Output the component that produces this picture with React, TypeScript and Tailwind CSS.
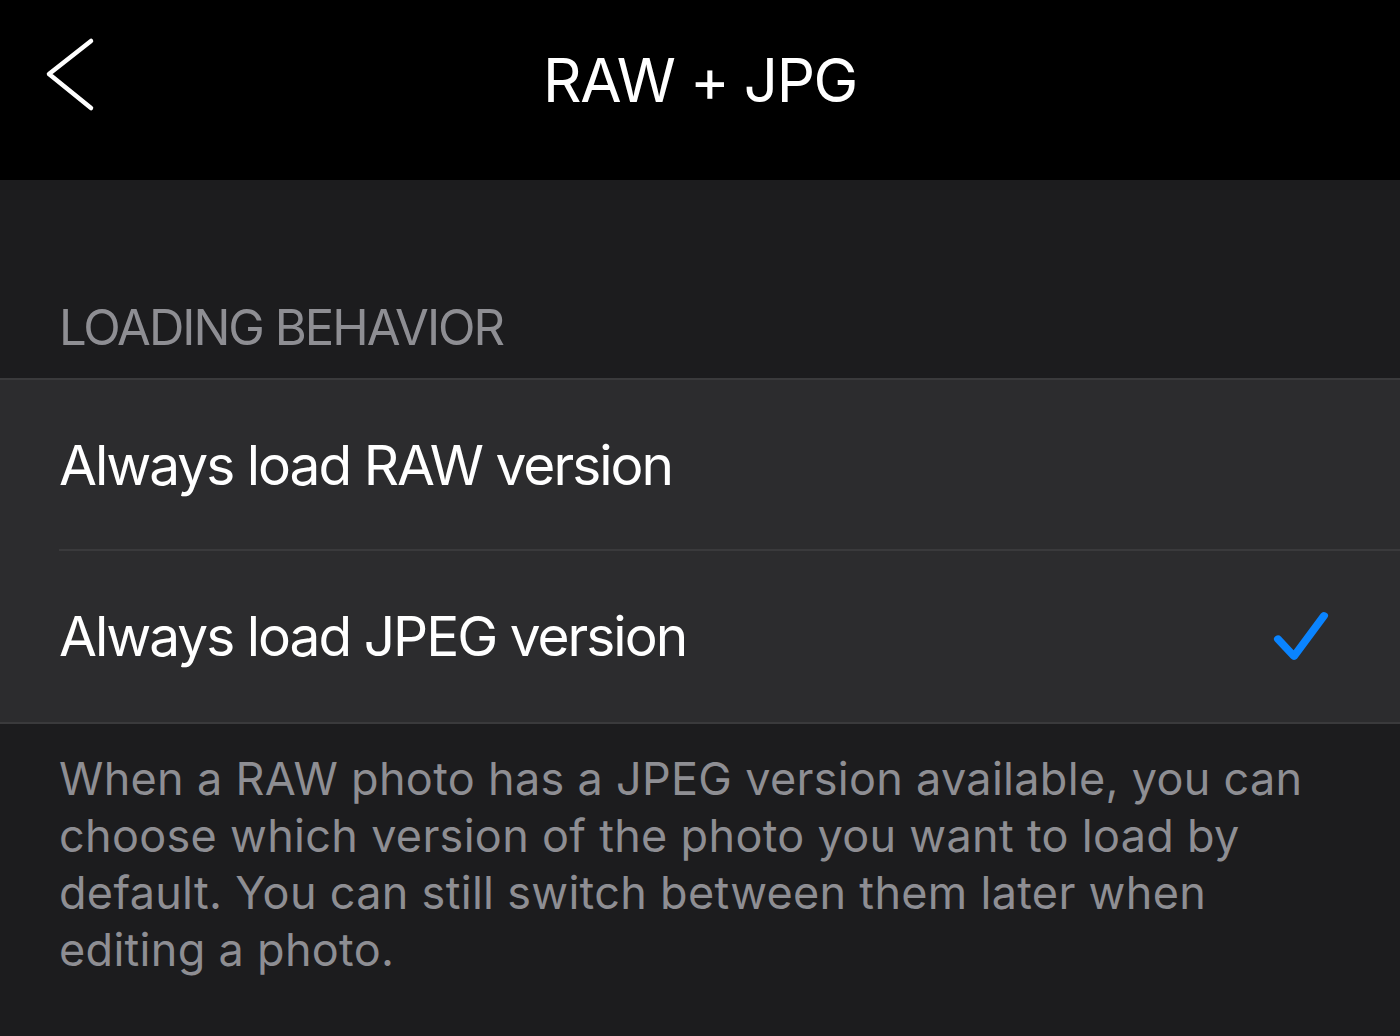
export default function App() {
  return (
    <div className="w-[1400px] h-[1036px] bg-[#1c1c1e] overflow-hidden font-['Inter','Liberation_Sans',sans-serif]">
      {/* Nav bar */}
      <div className="h-[180px] bg-black flex items-center justify-center relative">
        <button className="absolute left-[44px] top-[36px] w-[54px] h-[78px] flex items-center justify-center">
          <svg width="54" height="78" viewBox="0 0 54 78" fill="none">
            <path d="M47 5 L5 38 L47 72" stroke="white" strokeWidth="4.5" strokeLinecap="round" strokeLinejoin="round" />
          </svg>
        </button>
        <h1 className="text-white text-[60px] font-normal tracking-[-1.4px] mt-[-20px]">RAW + JPG</h1>
      </div>

      {/* Section header */}
      <div className="h-[198px] flex items-end px-[59px] pb-[26px]">
        <span className="text-[#8e8e93] text-[49px] leading-none uppercase tracking-[-2px]">Loading Behavior</span>
      </div>

      {/* Rows */}
      <div className="bg-[#2c2c2e] border-y-2 border-[#3a3a3c]">
        <div className="h-[171px] flex items-center pl-[59px]">
          <div className="flex-1 h-full flex items-center border-b-2 border-[#3a3a3c]">
            <span className="text-white text-[55px] leading-none pt-[2px] tracking-[-2px]">Always load RAW version</span>
          </div>
        </div>
        <div className="h-[171px] flex items-center pl-[59px] pr-[70px]">
          <span className="flex-1 text-white text-[55px] leading-none tracking-[-2px]">Always load JPEG version</span>
          <svg width="60" height="60" viewBox="0 0 60 60" fill="none">
            <path d="M8 19 L24 38 L54 -7" stroke="#0a84ff" strokeWidth="8" strokeLinecap="round" strokeLinejoin="round" transform="translate(0,15) scale(1,0.9)" />
          </svg>
        </div>
      </div>

      {/* Footer */}
      <p className="px-[59px] pt-[26px] text-[#8e8e93] text-[45px] leading-[57px] tracking-[0.3px]">
        When a RAW photo has a JPEG version available, you can choose which version of the photo you want to load by default. You can still switch between them later when editing a photo.
      </p>
    </div>
  );
}
